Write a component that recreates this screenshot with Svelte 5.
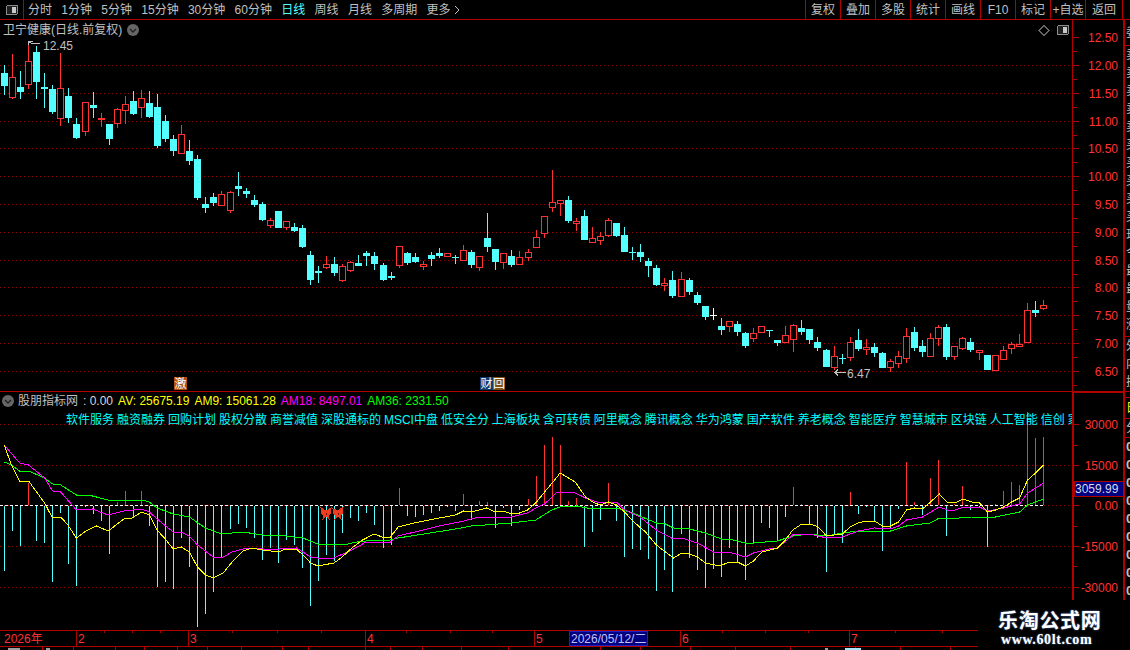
<script lang="ts">
	const tabs = ['分时', '1分钟', '5分钟', '15分钟', '30分钟', '60分钟', '日线', '周线', '月线', '多周期', '更多'];
	const tools = ['复权', '叠加', '多股', '统计', '画线', 'F10', '标记', '+自选', '返回'];

	// [high, bodyTop, bodyBottom, low, up]; all in page pixels
	const candles = [
		[65,73,86,95,0],[54,77,98,99,1],[71,87,92,99,0],[43,61,85,89,1],[46,52,82,99,0],[73,87,89,108,0],[85,89,112,114,0],[53,88,119,126,1],
		[88,96,118,123,0],[118,124,138,139,0],[102,102,132,136,1],[92,105,108,118,0],[113,118,120,127,1],[124,124,139,145,0],[108,109,124,128,1],[96,104,111,124,1],
		[91,101,114,115,0],[90,98,108,118,1],[91,103,117,118,0],[94,107,146,148,0],[115,121,139,142,0],[135,139,151,156,0],[125,134,154,154,1],[140,151,161,165,0],
		[155,159,198,200,0],[197,204,208,213,0],[193,197,203,206,0],[191,194,206,206,1],[191,192,211,213,1],[172,186,189,196,0],[188,191,194,198,0],[195,200,205,207,0],
		[202,204,220,221,0],[218,220,226,228,1],[211,211,228,228,0],[221,221,228,230,1],[223,227,231,232,0],[225,228,247,248,0],[251,255,280,285,0],[266,271,273,283,0],
		[256,264,268,269,1],[257,264,273,276,0],[264,266,281,282,1],[261,262,271,272,1],[255,263,266,266,0],[251,253,256,266,0],[252,256,264,270,0],[263,265,280,281,0],
		[272,276,278,280,0],[246,246,266,268,1],[252,253,263,265,0],[253,257,262,263,0],[261,264,267,270,1],[252,255,259,266,0],[248,253,256,258,0],[253,253,257,257,1],
		[255,257,258,264,0],[245,250,261,261,1],[250,252,265,268,0],[256,256,268,271,1],[213,238,247,252,0],[249,249,262,270,0],[253,253,263,269,1],[250,256,265,267,0],
		[251,257,265,265,1],[249,252,258,261,1],[230,237,248,248,1],[216,216,234,238,1],[170,202,208,212,1],[200,200,204,216,1],[196,200,221,223,0],[218,221,224,231,1],
		[210,216,240,240,0],[227,238,243,243,1],[232,236,241,245,1],[218,220,236,237,1],[223,223,236,237,0],[227,235,252,252,0],[247,252,253,260,0],[244,252,257,262,0],
		[258,261,266,277,0],[265,268,285,286,0],[278,283,286,291,1],[271,280,296,298,0],[272,279,297,297,1],[278,280,292,295,0],[292,295,303,305,0],[306,306,317,320,0],
		[308,315,316,320,2],[318,326,330,335,0],[321,321,327,332,1],[321,324,332,336,0],[332,333,346,348,0],[328,333,339,342,1],[326,326,333,333,1],[330,330,331,337,0],
		[340,340,343,346,0],[326,335,343,343,1],[324,325,340,352,1],[320,328,332,335,0],[329,329,340,344,0],[337,342,348,351,0],[349,350,367,367,0],[346,356,368,370,1],
		[354,358,359,364,0],[337,342,358,361,1],[329,340,349,351,0],[339,347,350,355,1],[343,347,353,357,0],[352,353,368,368,0],[359,361,368,372,1],[351,356,364,368,1],
		[328,336,359,363,1],[327,332,348,351,0],[340,346,352,357,0],[333,338,357,357,1],[325,327,339,346,1],[324,327,357,360,0],[346,346,357,360,1],[337,338,349,350,1],
		[338,342,350,352,0],[350,350,353,360,1],[355,355,370,370,0],[355,355,371,371,1],[346,350,360,360,1],[342,344,349,354,1],[334,344,347,347,1],[303,310,343,343,1],
		[301,310,313,317,0],[300,305,309,310,1]
	];

	// one value per candle, in pixels from the zero line; above is red, below is cyan
	const bars = [
		-65,-25,-40,22,-35,-37,-76,-7,-58,-80,-1,-8,-15,-48,3,14,-11,14,-20,-81,-76,-83,-32,-61,-121,-108,-86,-51,-23,-18,
		-22,-32,-54,-42,-57,-34,-39,-62,-100,-75,-49,-55,-27,-12,-15,-7,-19,-42,-39,17,-10,-11,-9,-7,-5,-1,-5,11,-14,4,
		3,-22,-2,-20,-4,6,29,60,68,60,4,7,-41,-26,-14,22,-15,-51,-43,-44,-53,-85,-64,-86,-28,-52,-64,-82,-63,-71,
		-42,-56,-74,-37,-17,-22,-35,-11,18,1,-19,-32,-66,-29,-37,13,-8,-1,-15,-45,-23,-3,43,3,-9,27,45,-30,1,19,
		-4,-1,-41,1,14,23,20,93,67,68
	];

	const centre = (i: number) => Math.floor(4.5 + 8.054 * i);

	// line points were read off two crops with different x scales
	function toPoints(leftPart: number[], rightPart: number[]) {
		const out: string[] = [];
		for (let i = 0; i < leftPart.length; i += 2) out.push(`${(leftPart[i] / 2.8).toFixed(1)},${leftPart[i + 1]}`);
		for (let i = 0; i < rightPart.length; i += 2) out.push(`${(560 + rightPart[i] / 2.75).toFixed(1)},${rightPart[i + 1]}`);
		return out.join(' ');
	}

	const lines = [
		{
			color: '#00ff00',
			points: toPoints(
				[12,462,32,465,55,471,80,471,125,478,147,484,170,485,214,495,259,496,303,500,348,501,397,500,418,502,440,508,485,514,530,517,575,528,620,534,680,532,735,535,800,536,848,538,890,544,960,545,1000,542,1048,540,1093,540,1115,538,1275,529,1320,526,1432,523,1500,520,1545,510],
				[0,507,45,506,90,509,133,508,155,508,200,513,265,523,290,524,312,528,356,529,400,533,444,539,465,539,510,543,532,543,598,541,640,536,688,534,733,536,776,533,820,531,909,531,953,526,1019,523,1043,518,1065,519,1132,517,1198,517,1264,512,1286,505,1330,499]
			)
		},
		{
			color: '#ff00ff',
			points: toPoints(
				[12,445,55,463,80,465,125,478,147,491,170,492,214,510,259,509,303,515,348,511,397,509,418,512,440,519,485,532,508,532,530,536,553,545,597,557,625,557,650,552,680,549,705,548,735,549,780,549,830,548,848,552,870,557,890,558,935,558,985,550,1020,543,1048,542,1093,542,1115,536,1230,526,1298,521,1340,517,1387,517,1432,517,1477,513,1500,508,1525,504,1560,492],
				[0,492,42,493,70,498,110,503,133,502,155,502,178,510,220,517,265,530,312,539,335,538,378,543,422,552,465,552,510,557,532,553,575,549,598,548,640,535,688,534,733,538,776,537,820,531,865,528,909,529,931,526,953,520,997,517,1043,507,1065,510,1087,510,1109,507,1154,507,1176,511,1220,508,1264,504,1286,493,1308,488,1330,483]
			)
		},
		{
			color: '#ffff00',
			points: toPoints(
				[12,445,32,465,55,481,80,481,125,503,147,518,170,517,190,525,214,538,240,531,270,526,303,531,350,518,370,518,397,512,418,515,440,530,465,540,485,549,508,547,530,552,553,567,575,575,597,578,625,573,650,562,680,551,705,548,735,550,780,552,800,549,830,549,848,555,870,563,890,566,935,563,955,558,985,548,1015,540,1048,534,1070,537,1093,537,1115,527,1160,523,1230,518,1275,515,1298,511,1320,512,1362,508,1387,512,1410,511,1432,514,1455,513,1477,510,1500,503,1525,492,1560,477],
				[0,473,42,482,70,497,90,502,110,505,133,502,155,505,178,512,200,521,235,532,265,545,290,552,312,558,335,553,356,554,378,557,400,563,440,566,465,562,488,562,510,566,532,561,555,552,598,548,620,540,640,530,665,524,690,524,710,527,733,536,776,534,798,527,820,523,842,521,865,521,887,526,909,526,931,522,953,510,975,508,997,509,1019,502,1043,494,1065,502,1087,503,1109,499,1132,502,1154,503,1176,512,1198,510,1220,507,1242,502,1264,498,1286,480,1308,473,1330,465]
			)
		}
	];

	const priceLabels = ['12.50','12.00','11.50','11.00','10.50','10.00','9.50','9.00','8.50','8.00','7.50','7.00','6.50'];
	const priceY = [37,65,93,121,148,176,204,232,260,287,315,343,371];
	const indLabels = [['30000',424],['15000',465],['0.00',505],['-15000',546],['-30000',587]] as [string, number][];

	const concepts = '软件服务 融资融券 回购计划 股权分散 商誉减值 深股通标的 MSCI中盘 低安全分 上海板块 含可转债 阿里概念 腾讯概念 华为鸿蒙 国产软件 养老概念 智能医疗 智慧城市 区块链 人工智能 信创 家';

	const months = [['2',76],['3',188],['4',365],['5',534],['6',680],['7',849]] as [string, number][];
	const topTicks = [104,132,160,232,277,321,406,450,492,722,765,808,895,942];
	const lowTicks = [42,73,115,144,177,207,241,282,308,365,390,422,461,508,600,640,690,735,790,855,900,950];

	const sideRows = ['卖五','卖四','卖三','卖二','卖一','买一','买二','买三','买四','买五','现价','今开','最高','最低','量比','涨停'];
	const sideDigits = [0,1,2,3,4,5,6,7,8];
</script>

<div class="screen">
	<header class="toolbar">
		<div class="panel-toggle">
			<svg width="12" height="10" viewBox="0 0 12 10"><rect x="0.5" y="0.5" width="11" height="9" rx="1.5" fill="#202020" stroke="#8c8c8c" /><rect x="6" y="2" width="4" height="6" fill="#c8c8c8" /></svg>
		</div>
		<nav class="tabs">
			{#each tabs as tab}
				<span class:active={tab === '日线'}>{tab}</span>
			{/each}
			<svg class="more-arrow" width="6" height="10" viewBox="0 0 6 10"><path d="M1 1l4 4-4 4" fill="none" stroke="#c0c0c0" /></svg>
		</nav>
		<div class="tools">
			{#each tools as tool}
				<span>{tool}</span>
			{/each}
		</div>
	</header>

	<div class="content">
		<main class="charts">
			<section class="price-panel">
				<svg class="plot" width="1123" height="371" viewBox="0 20 1123 371">
					{#each priceY.slice(1) as y}
						<line class="dots" x1="0" x2="1072" y1={y + 0.5} y2={y + 0.5} />
					{/each}
					{#each candles as [high, top, bottom, low, up], i}
						{@const x = centre(i)}
						{@const color = up === 2 ? '#ffffff' : up ? '#ff3232' : '#54ffff'}
						<rect {x} y={high} width="1" height={low - high} fill={color} />
						{#if up === 1}
							<rect x={x - 3 + 0.5} y={top + 0.5} width="6" height={bottom - top - 1} fill="#000" stroke={color} />
						{:else}
							<rect x={x - 3} y={top} width="7" height={Math.max(bottom - top, 1)} fill={color} />
						{/if}
					{/each}

					<polyline points="33,41 28,41 28,45" fill="none" stroke="#c0c0c0" />
					<polyline points="29,42 33,44 36,43 40,44" fill="none" stroke="#c0c0c0" />
					<text class="note" x="43" y="50">12.45</text>
					<path d="M835 372.5h11M838 369.5l-3 3 3 3" fill="none" stroke="#c0c0c0" />
					<text class="note" x="847" y="378">6.47</text>

					<rect class="axis" x="1072" y="20" width="1" height="371" />
					{#each priceLabels as label, i}
						<rect class="axis" x="1073" y={priceY[i]} width="6" height="1" />
						<rect class="axis" x="1073" y={priceY[i] + 14} width="4" height="1" />
						<text class="scale" x="1118" y={priceY[i] + 5}>{label}</text>
					{/each}

					<rect x="174" y="377" width="13" height="13" fill="#b0500f" />
					<text class="badge" x="174.5" y="388">激</text>
					<rect x="480" y="377" width="13" height="13" fill="#123c6e" />
					<text class="badge" x="480.5" y="388">财</text>
					<rect x="493" y="377" width="12" height="13" fill="#80500f" />
					<text class="badge" x="493" y="388">回</text>

					<path class="diamond" d="M1044 25.5l5 5-5 5-5-5z" />
					<rect x="1057.5" y="25.5" width="11" height="9" rx="1.5" fill="#202020" stroke="#8c8c8c" />
					<rect x="1063" y="27" width="4" height="6" fill="#c8c8c8" />
				</svg>
				<div class="stock-title">
					卫宁健康(日线.前复权)
					<svg class="chevron" width="12" height="12" viewBox="0 0 12 12"><circle cx="6" cy="6" r="6" fill="#666" /><path d="M3 5l3 3 3-3" fill="none" stroke="#222" stroke-width="1.4" /></svg>
				</div>
			</section>

			<section class="ind-panel">
				<svg class="plot" width="1123" height="239" viewBox="0 391 1123 239">
					<rect class="axis" x="0" y="391" width="1123" height="1" />
					<rect class="axis" x="1073" y="392" width="50" height="1" />
					{#each indLabels as [, y]}
						<line class="dots" x1="0" x2="1072" y1={y + 0.5} y2={y + 0.5} />
					{/each}
					<line class="zero" x1="0" x2="1044" y1="505.5" y2="505.5" />
					{#each bars as h, i}
						<rect x={centre(i)} y={h > 0 ? 505 - h : 506} width="1" height={Math.abs(h)} fill={h > 0 ? '#ff3232' : '#54ffff'} />
					{/each}
					{#each lines as line}
						<polyline points={line.points} fill="none" stroke={line.color} />
					{/each}

					<g class="butterfly">
						<path d="M321 508l5 3 5-3-1 6-2 1 1 4-3-3-3 3 1-4-2-1z" />
						<path d="M333 509l5 2 5-4-1 7-2 1 1 4-3-3-3 3 1-4-2-1z" />
						<path class="wing-mark" d="M326 513v2M338 513v2" />
					</g>

					<rect class="axis" x="1072" y="391" width="2" height="209" />
					{#each [445,485,526,566] as y}
						<rect class="axis" x="1074" y={y} width="3" height="1" />
					{/each}
					{#each indLabels as [label, y]}
						<rect class="axis" x="1074" y={y} width="5" height="1" />
						<text class="scale" x="1118" y={y + 5}>{label}</text>
					{/each}
					<rect x="1074.5" y="481.5" width="49" height="15" fill="#000080" stroke="#b00000" />
					<text class="cursor-value" x="1075" y="493">3059.99</text>
				</svg>
				<div class="ind-legend">
					<svg class="chevron" width="12" height="12" viewBox="0 0 12 12"><circle cx="6" cy="6" r="6" fill="#666" /><path d="M3 5l3 3 3-3" fill="none" stroke="#222" stroke-width="1.4" /></svg>
					<span class="name">股朋指标网</span>
					<span class="val">: 0.00</span>
					<span class="av">AV: 25675.19</span>
					<span class="am9">AM9: 15061.28</span>
					<span class="am18">AM18: 8497.01</span>
					<span class="am36">AM36: 2331.50</span>
				</div>
				<div class="concepts">{concepts}</div>
			</section>

			<svg class="date-axis" width="978" height="20" viewBox="0 630 978 20">
				<rect class="axis" x="0" y="630" width="978" height="1" />
				<rect class="axis" x="0" y="646" width="978" height="1" />
				<text class="date" x="4" y="643">2026年</text>
				{#each months as [label, x]}
					<rect class="axis" {x} y="630" width="1" height="16" />
					<text class="date" x={x + 2} y="643">{label}</text>
				{/each}
				{#each topTicks as x}
					<rect class="axis" {x} y="630" width="1" height="3" />
				{/each}
				{#each lowTicks as x}
					<rect class="axis" {x} y="646" width="1" height="4" />
				{/each}
				<rect x="8" y="648" width="12" height="2" fill="#a0a0a0" />
				<rect x="46" y="648" width="4" height="2" fill="#a0a0a0" />
				<rect x="825" y="648" width="3" height="2" fill="#a0a0a0" />
				<rect x="845" y="648" width="16" height="2" fill="#a8e8ff" />
				<rect x="569.5" y="631.5" width="78" height="14" fill="#000080" stroke="#2020c0" />
				<text class="date-cursor" x="571" y="643">2026/05/12/二</text>
			</svg>
		</main>

		<aside class="side">
			<div class="side-group top">委比</div>
			<div class="side-group rows">
				{#each sideRows as row}
					<div>{row}</div>
				{/each}
			</div>
			<div class="side-group last-rows">
				<div>外盘</div>
				<div>内盘</div>
				<div>换手</div>
			</div>
			<div class="side-group thin"></div>
			<div class="side-group mark">日</div>
			<div class="side-group label">分</div>
			<div class="digits">
				{#each sideDigits as d}
					<div>0</div>
				{/each}
			</div>
		</aside>
	</div>

	<div class="watermark">
		<div class="wm-title">乐淘公式网</div>
		<div class="wm-url">www.60lt.com</div>
	</div>
</div>

<style>
	:global(body) {
		margin: 0;
		background: #000;
	}

	.screen {
		position: relative;
		width: 1130px;
		height: 650px;
		overflow: hidden;
		background: #000;
		color: #c0c0c0;
		font: 12px "Liberation Sans", "Noto Sans CJK SC", sans-serif;
	}

	.toolbar {
		display: flex;
		height: 19px;
		border-bottom: 1px solid #b00000;
		line-height: 21px;
	}

	.panel-toggle {
		display: flex;
		align-items: center;
		justify-content: center;
		width: 23px;
		border-right: 1px solid #b00000;
		box-sizing: content-box;
	}

	.tabs {
		display: flex;
		align-items: flex-start;
		gap: 9.3px;
		padding-left: 4px;
		flex: 1;
	}

	.tabs span {
		height: 19px;
	}

	.tabs .active {
		color: #54ffff;
	}

	.more-arrow {
		margin: 5px 0 0 -6px;
	}

	.tools {
		display: flex;
		margin-right: 7px;
	}

	.tools span {
		width: 34px;
		height: 19px;
		border-left: 1px solid #b00000;
		text-align: center;
		white-space: nowrap;
	}

	.tools span:last-child {
		width: 36px;
		border-right: 1px solid #b00000;
	}

	.content {
		display: flex;
	}

	.charts {
		width: 1123px;
		flex: none;
	}

	.price-panel,
	.ind-panel {
		position: relative;
	}

	svg {
		display: block;
		shape-rendering: crispEdges;
	}

	.chevron {
		flex: none;
		shape-rendering: auto;
	}

	text {
		font: 12px "Liberation Sans", "Noto Sans CJK SC", sans-serif;
	}

	.dots {
		stroke: #980000;
		stroke-dasharray: 1 3;
	}

	.zero {
		stroke: #fff;
		stroke-dasharray: 3 2;
	}

	.axis {
		fill: #b00000;
	}

	.scale {
		fill: #ff3232;
		text-anchor: end;
	}

	.note {
		fill: #c0c0c0;
	}

	.badge {
		fill: #fff;
	}

	.diamond {
		fill: none;
		stroke: #666;
	}

	.butterfly path {
		fill: #f03c20;
		stroke: #e63a20;
	}

	.butterfly .wing-mark {
		fill: none;
		stroke: #701008;
	}

	.cursor-value {
		fill: #d8d8e8;
	}

	.date {
		fill: #ff3232;
	}

	.date-cursor {
		fill: #c0c0ff;
	}

	.stock-title {
		position: absolute;
		left: 3px;
		top: 1px;
		display: flex;
		align-items: center;
		gap: 5px;
		line-height: 18px;
		white-space: nowrap;
	}

	.ind-legend {
		position: absolute;
		left: 2px;
		top: 2px;
		display: flex;
		align-items: center;
		line-height: 16px;
		white-space: nowrap;
	}

	.ind-legend .name {
		margin-left: 4px;
	}

	.ind-legend .val {
		margin-left: 5px;
		color: #d8d8d8;
	}

	.ind-legend .av,
	.ind-legend .am9 {
		margin-left: 5px;
		color: #ffff00;
	}

	.ind-legend .am18 {
		margin-left: 5px;
		color: #ff00ff;
	}

	.ind-legend .am36 {
		margin-left: 5px;
		color: #00ff00;
	}

	.concepts {
		position: absolute;
		left: 66px;
		top: 20px;
		width: 1006px;
		overflow: hidden;
		color: #00ffff;
		line-height: 18px;
		word-spacing: -0.35px;
		white-space: nowrap;
	}

	.side {
		flex: none;
		width: 7px;
		height: 580px;
		overflow: hidden;
		box-sizing: border-box;
		border-left: 2px solid #b00000;
		white-space: nowrap;
	}

	.side-group {
		box-sizing: border-box;
		border-bottom: 1px solid #b00000;
		padding-left: 1px;
		overflow: hidden;
	}

	.top {
		height: 26px;
		line-height: 26px;
	}

	.rows {
		height: 291px;
		line-height: 18px;
	}

	.last-rows {
		height: 55px;
		line-height: 18px;
	}

	.thin {
		height: 6px;
	}

	.mark {
		height: 21px;
		line-height: 21px;
		color: #ffff00;
	}

	.label {
		height: 19px;
		line-height: 19px;
	}

	.digits {
		padding-left: 1px;
		font-weight: 700;
		font-size: 13px;
		line-height: 18px;
	}

	.watermark {
		position: absolute;
		left: 978px;
		top: 600px;
		width: 152px;
		height: 50px;
		background: #000;
		color: #fff;
		text-align: center;
		text-shadow: 0 0 2px #6080c0;
	}

	.wm-title {
		margin-top: 8px;
		padding-left: 20px;
		text-align: left;
		font: 700 20px/24px "Noto Sans CJK SC", sans-serif;
		letter-spacing: 0.7px;
	}

	.wm-url {
		padding-left: 23px;
		text-align: left;
		font: 700 14px/16px "Liberation Serif", serif;
		letter-spacing: 0.6px;
	}
</style>
